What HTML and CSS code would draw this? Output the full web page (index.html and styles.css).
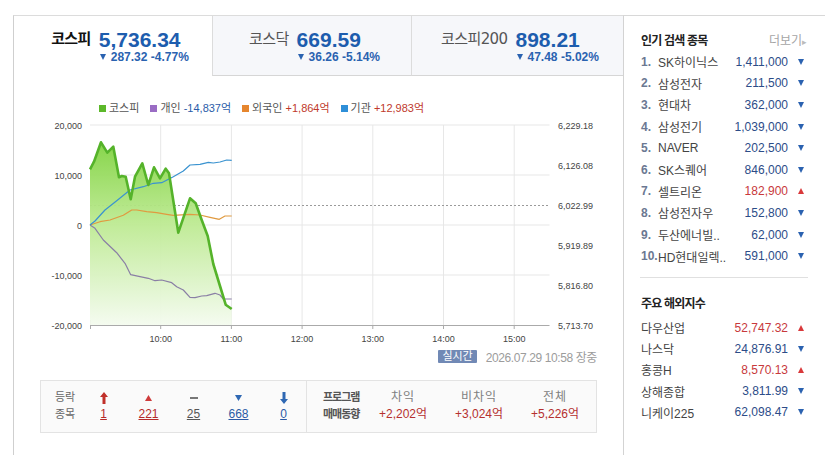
FILE: index.html
```html
<!DOCTYPE html>
<html lang="ko">
<head>
    <meta charset="UTF-8">
    <meta name="viewport" content="width=device-width, initial-scale=1.0">
    <title>국내증시</title>
    <link rel="stylesheet" href="styles.css">
</head>
<body>
<div class="page">
    <div class="main">
        <!-- Index tabs -->
        <ul class="tabs">
            <li class="tab on">
                <span class="tab-name">코스피</span>
                <div class="tab-val">
                    <strong>5,736.34</strong>
                    <span class="chg"><i class="tri-dn"></i>287.32 -4.77%</span>
                </div>
            </li>
            <li class="tab">
                <span class="tab-name">코스닥</span>
                <div class="tab-val">
                    <strong>669.59</strong>
                    <span class="chg"><i class="tri-dn"></i>36.26 -5.14%</span>
                </div>
            </li>
            <li class="tab">
                <span class="tab-name">코스피200</span>
                <div class="tab-val">
                    <strong>898.21</strong>
                    <span class="chg"><i class="tri-dn"></i>47.48 -5.02%</span>
                </div>
            </li>
        </ul>

        <!-- Chart legend -->
        <ul class="legend">
            <li><i class="sq green"></i>코스피</li>
            <li><i class="sq purple"></i>개인 <span class="minus">-14,837억</span></li>
            <li><i class="sq orange"></i>외국인 <span class="plus">+1,864억</span></li>
            <li><i class="sq blue"></i>기관 <span class="plus">+12,983억</span></li>
        </ul>

        <svg class="chart" width="580" height="230" viewBox="20 116 580 230">
            <defs>
                <linearGradient id="kospiFill" gradientUnits="userSpaceOnUse" x1="0" y1="140" x2="0" y2="325">
                    <stop offset="0" stop-color="#7fd23f"/>
                    <stop offset="0.45" stop-color="#bdea92"/>
                    <stop offset="1" stop-color="#f4fbef"/>
                </linearGradient>
            </defs>

            <!-- grid -->
            <g class="grid">
                <line x1="90" y1="125" x2="549.5" y2="125"/>
                <line x1="90" y1="175" x2="549.5" y2="175"/>
                <line x1="90" y1="225" x2="549.5" y2="225"/>
                <line x1="90" y1="275" x2="549.5" y2="275"/>
                <line x1="160.7" y1="125" x2="160.7" y2="325"/>
                <line x1="231.4" y1="125" x2="231.4" y2="325"/>
                <line x1="302.1" y1="125" x2="302.1" y2="325"/>
                <line x1="372.8" y1="125" x2="372.8" y2="325"/>
                <line x1="443.5" y1="125" x2="443.5" y2="325"/>
                <line x1="514.2" y1="125" x2="514.2" y2="325"/>
            </g>
            <g class="axis-line">
                <line x1="90" y1="325.5" x2="549.5" y2="325.5"/>
                <line x1="90.5" y1="320" x2="90.5" y2="329"/>
                <line x1="160.7" y1="325" x2="160.7" y2="329"/>
                <line x1="231.4" y1="325" x2="231.4" y2="329"/>
                <line x1="302.1" y1="325" x2="302.1" y2="329"/>
                <line x1="372.8" y1="325" x2="372.8" y2="329"/>
                <line x1="443.5" y1="325" x2="443.5" y2="329"/>
                <line x1="514.2" y1="325" x2="514.2" y2="329"/>
            </g>

            <!-- previous close -->
            <line class="prev" x1="90" y1="205.5" x2="549.5" y2="205.5"/>

            <!-- KOSPI area -->
            <polygon class="area" points="90,169.3 94,161.7 101,142.3 107.3,152.7 113.3,146.7 119,177.3 121.7,176 125.7,176.7 130.7,199.3 135,176.7 142.3,163.3 148.3,185 154,167.3 160,178.3 165.7,168.7 169,173.3 178.3,232.7 190,198.3 195.7,203.3 201.7,220 207.7,236 213.3,264 220,286 225.7,304.7 231.7,309 231.7,325 90,325"/>

            <!-- investor lines -->
            <polyline class="ln-person" points="90,225 95,228.3 103.3,240 116.7,252.7 125,263.3 130.7,274.7 140,276.7 148.3,278.3 155,280.7 161.7,280 171.7,282.7 176.7,286.7 183.3,290 190,297.3 195,297.7 201.7,296 206.7,295.7 215,293.3 220,295 223.3,299 231.7,299"/>
            <polyline class="ln-foreign" points="90,225 100,221.7 110,220 123.3,215.3 131.7,210 136.7,210 146.7,211.7 156.7,212.7 166.7,214.3 173.3,215.3 190,214.3 200,215 210,217.3 219.3,219.3 225,216 231.7,216"/>
            <polyline class="ln-inst" points="90,225 95,221 105,210 116.7,200.7 130,190 143.3,186.7 153.3,183.3 161.7,182.7 173.3,176.7 183.3,171 190,165 200,164.3 208.3,162.3 213.3,163 220,162 226.7,160 231.7,160.3"/>
            <polyline class="ln-kospi" points="90,169.3 94,161.7 101,142.3 107.3,152.7 113.3,146.7 119,177.3 121.7,176 125.7,176.7 130.7,199.3 135,176.7 142.3,163.3 148.3,185 154,167.3 160,178.3 165.7,168.7 169,173.3 178.3,232.7 190,198.3 195.7,203.3 201.7,220 207.7,236 213.3,264 220,286 225.7,304.7 231.7,309"/>

            <!-- axis labels -->
            <g class="labels left">
                <text x="82" y="128.5">20,000</text>
                <text x="82" y="178.5">10,000</text>
                <text x="82" y="228.5">0</text>
                <text x="82" y="278.5">-10,000</text>
                <text x="82" y="328.5">-20,000</text>
            </g>
            <g class="labels right">
                <text x="558" y="128.5">6,229.18</text>
                <text x="558" y="168.5">6,126.08</text>
                <text x="558" y="208.5">6,022.99</text>
                <text x="558" y="248.5">5,919.89</text>
                <text x="558" y="288.5">5,816.80</text>
                <text x="558" y="328.5">5,713.70</text>
            </g>
            <g class="labels bottom">
                <text x="160.7" y="341.5">10:00</text>
                <text x="231.4" y="341.5">11:00</text>
                <text x="302.1" y="341.5">12:00</text>
                <text x="372.8" y="341.5">13:00</text>
                <text x="443.5" y="341.5">14:00</text>
                <text x="514.2" y="341.5">15:00</text>
            </g>
        </svg>

        <div class="stamp">
            <span class="badge">실시간</span>
            <span class="time">2026.07.29 10:58 장중</span>
        </div>

        <!-- Advance / decline and program trading -->
        <div class="updown">
            <div class="ud-label">등락<br>종목</div>
            <div class="ud-col">
                <svg width="8" height="12" viewBox="0 0 8 12"><polygon points="4,0 8,5 5.5,5 5.5,12 2.5,12 2.5,5 0,5" fill="#c0302a"/></svg>
                <a class="cnt red">1</a>
            </div>
            <div class="ud-col">
                <svg width="7" height="6" viewBox="0 0 7 6"><polygon points="3.5,0 7,6 0,6" fill="#cf3b3b"/></svg>
                <a class="cnt red">221</a>
            </div>
            <div class="ud-col">
                <svg width="8" height="6" viewBox="0 0 8 6"><rect x="0" y="2" width="8" height="2" fill="#777"/></svg>
                <a class="cnt gray">25</a>
            </div>
            <div class="ud-col">
                <svg width="7" height="6" viewBox="0 0 7 6"><polygon points="0,0 7,0 3.5,6" fill="#2f68b3"/></svg>
                <a class="cnt blue">668</a>
            </div>
            <div class="ud-col">
                <svg width="8" height="12" viewBox="0 0 8 12"><polygon points="2.5,0 5.5,0 5.5,7 8,7 4,12 0,7 2.5,7" fill="#2f68b3"/></svg>
                <a class="cnt blue">0</a>
            </div>
            <div class="program">
                <div class="pg-label">프로그램<br>매매동향</div>
                <div class="pg-col"><span>차익</span><em>+2,202억</em></div>
                <div class="pg-col"><span>비차익</span><em>+3,024억</em></div>
                <div class="pg-col"><span>전체</span><em>+5,226억</em></div>
            </div>
        </div>
    </div>

    <aside class="side">
        <div class="side-title">
            <h3>인기 검색 종목</h3>
            <a class="more">더보기<i>▸</i></a>
        </div>
        <ol class="rank">
            <li><b>1.</b><span class="nm">SK하이닉스</span><span class="val">1,411,000</span><i class="dn"></i></li>
            <li><b>2.</b><span class="nm">삼성전자</span><span class="val">211,500</span><i class="dn"></i></li>
            <li><b>3.</b><span class="nm">현대차</span><span class="val">362,000</span><i class="dn"></i></li>
            <li><b>4.</b><span class="nm">삼성전기</span><span class="val">1,039,000</span><i class="dn"></i></li>
            <li><b>5.</b><span class="nm">NAVER</span><span class="val">202,500</span><i class="dn"></i></li>
            <li><b>6.</b><span class="nm">SK스퀘어</span><span class="val">846,000</span><i class="dn"></i></li>
            <li><b>7.</b><span class="nm">셀트리온</span><span class="val up">182,900</span><i class="up"></i></li>
            <li><b>8.</b><span class="nm">삼성전자우</span><span class="val">152,800</span><i class="dn"></i></li>
            <li><b>9.</b><span class="nm">두산에너빌..</span><span class="val">62,000</span><i class="dn"></i></li>
            <li><b>10.</b><span class="nm">HD현대일렉..</span><span class="val">591,000</span><i class="dn"></i></li>
        </ol>

        <div class="divider"></div>

        <div class="side-title second">
            <h3>주요 해외지수</h3>
        </div>
        <ul class="world">
            <li><span class="nm">다우산업</span><span class="val up">52,747.32</span><i class="up"></i></li>
            <li><span class="nm">나스닥</span><span class="val">24,876.91</span><i class="dn"></i></li>
            <li><span class="nm">홍콩H</span><span class="val up">8,570.13</span><i class="up"></i></li>
            <li><span class="nm">상해종합</span><span class="val">3,811.99</span><i class="dn"></i></li>
            <li><span class="nm">니케이225</span><span class="val">62,098.47</span><i class="dn"></i></li>
        </ul>
    </aside>
</div>
</body>
</html>
```

FILE: styles.css
```css
body {
    margin: 0;
    font-family: 'Liberation Sans', 'Noto Sans CJK KR', sans-serif;
    font-size: 12px;
    color: #333;
    background: #fff;
}

ul, ol {
    margin: 0;
    padding: 0;
    list-style: none;
}

.page {
    display: flex;
    padding: 15px 0 0 13px;
    height: 440px;
    overflow: hidden;
}

/* left block */
.main {
    width: 609px;
    border-left: 1px solid #cfcfcf;
    border-top: 1px solid #dcdcdc;
}

.tabs {
    display: grid;
    grid-template-columns: 198px 199px 1fr;
    height: 60px;
}

.tab {
    display: flex;
    justify-content: center;
    align-items: flex-start;
    gap: 8px;
    padding: 13px 0 0 5px;
    background: #f6f7fa;
    border-left: 1px solid #dcdcdc;
    border-bottom: 1px solid #d6d6d6;
}

.tab.on {
    padding-left: 14px;
    background: #fff;
    border-left: 0;
    border-bottom-color: transparent;
}

.tab-name {
    font-family: 'DejaVu Sans', 'Noto Sans CJK KR', sans-serif;
    font-size: 15px;
    line-height: 21px;
    color: #555;
    letter-spacing: -0.6px;
}

.tab.on .tab-name {
    color: #111;
    font-weight: bold;
}

.tab-val strong {
    display: block;
    font-size: 21px;
    line-height: 21px;
    color: #1d5dae;
}

.chg {
    display: block;
    font-size: 12px;
    line-height: 14px;
    font-weight: bold;
    color: #2a62b0;
    white-space: nowrap;
}

.tri-dn {
    display: inline-block;
    width: 0;
    height: 0;
    border-left: 3px solid transparent;
    border-right: 3px solid transparent;
    border-top: 6px solid #2a62b0;
    margin: 0 5px 1px 1px;
}

/* chart legend */
.legend {
    display: flex;
    gap: 11px;
    margin: 24px 0 0 85px;
    height: 16px;
    line-height: 16px;
    font-size: 11px;
    color: #555;
}

.sq {
    display: inline-block;
    width: 7px;
    height: 7px;
    margin-right: 3px;
    vertical-align: 0;
}

.sq.green { background: #5cb82a; }
.sq.purple { background: #9a6cc4; }
.sq.orange { background: #e6862e; }
.sq.blue { background: #2e8fd8; }

.legend .minus { color: #2a5ca8; }
.legend .plus { color: #c0392b; }

.chart {
    display: block;
    margin-left: 6px;
}

.grid line {
    stroke: #e7e7e7;
    stroke-width: 1;
}

.axis-line line {
    stroke: #aaa;
    stroke-width: 1;
}

.prev {
    stroke: #9a9a9a;
    stroke-width: 1;
    stroke-dasharray: 2 2;
}

.area {
    fill: url(#kospiFill);
    opacity: 0.95;
}

.chart polyline {
    fill: none;
    stroke-linejoin: round;
}

.ln-kospi { stroke: #55b32a; stroke-width: 2.6; }
.ln-inst { stroke: #3a93d0; stroke-width: 1.2; }
.ln-foreign { stroke: #e09a40; stroke-width: 1.2; }
.ln-person { stroke: #8a7fa5; stroke-width: 1.2; }

.labels text {
    font-family: 'Liberation Sans', sans-serif;
    font-size: 9px;
    fill: #444;
}

.labels.left text { text-anchor: end; }
.labels.bottom text { text-anchor: middle; }

.stamp {
    display: flex;
    justify-content: flex-end;
    align-items: center;
    height: 14px;
    margin-top: 3px;
    padding-right: 26px;
}

.badge {
    background: #7189b5;
    color: #fff;
    font-size: 11px;
    line-height: 13px;
    padding: 0 4px;
    border-radius: 1px;
}

.time {
    margin-left: 9px;
    color: #9c9c9c;
    font-size: 12px;
    letter-spacing: -0.4px;
}

/* advance / decline box */
.updown {
    display: flex;
    width: 555px;
    height: 51px;
    margin: 17px 0 0 26px;
    border: 1px solid #e3e3e3;
    background: #fafafa;
}

.ud-label {
    width: 26px;
    padding: 8px 0 0 14px;
    line-height: 17px;
    font-size: 11px;
    color: #666;
}

.ud-col {
    width: 45px;
    padding-top: 8px;
    display: flex;
    flex-direction: column;
    align-items: center;
}

.ud-col svg {
    display: block;
}

.ud-col svg[height="6"] {
    margin: 6px 0 5px;
}

.ud-col svg[height="12"] {
    margin: 3px 0 2px;
}

.cnt {
    font-size: 12px;
    line-height: 17px;
    text-decoration: underline;
}

.cnt.red { color: #b52a2a; }
.cnt.gray { color: #555; }
.cnt.blue { color: #2a5aa5; }

.program {
    display: flex;
    padding-left: 16px;
    border-left: 1px solid #e3e3e3;
}

.pg-label {
    width: 42px;
    padding-top: 8px;
    line-height: 17px;
    font-size: 11px;
    font-weight: bold;
    color: #555;
    letter-spacing: -1px;
}

.pg-col {
    width: 76px;
    padding-top: 8px;
    display: flex;
    flex-direction: column;
    align-items: center;
    line-height: 17px;
}

.pg-col span {
    font-size: 12px;
    color: #808080;
    letter-spacing: 1px;
}

.pg-col em {
    font-style: normal;
    font-size: 12px;
    color: #b5302f;
}

/* right panel */
.side {
    width: 167px;
    padding: 13px 17px 0 17px;
    border-left: 1px solid #d3d3d3;
    border-top: 1px solid #d8d8d8;
}

.side-title {
    display: flex;
    justify-content: space-between;
    align-items: center;
    height: 20px;
}

.side-title h3 {
    margin: 0;
    font-size: 12px;
    font-weight: bold;
    color: #222;
    letter-spacing: -0.8px;
}

.more {
    color: #a5a5a5;
    font-size: 12px;
    margin-right: 1px;
}

.more i {
    font-style: normal;
    font-size: 9px;
    color: #bbb;
}

.rank {
    margin-top: 2px;
}

.rank li,
.world li {
    display: grid;
    grid-template-columns: 17px 1fr auto 20px;
    align-items: center;
    height: 21.6px;
    white-space: nowrap;
}

.world li {
    grid-template-columns: 1fr auto 20px;
    height: 21.2px;
}

.rank b {
    font-size: 12px;
    color: #6b7892;
}

.nm {
    font-size: 12px;
    color: #444;
    overflow: hidden;
}

.val {
    font-size: 12px;
    color: #2c4c88;
    text-align: right;
}

.val.up {
    color: #c8393c;
}

.rank i,
.world i {
    justify-self: end;
    margin-right: 4px;
    width: 0;
    height: 0;
    border-left: 3px solid transparent;
    border-right: 3px solid transparent;
}

i.dn { border-top: 6px solid #2b62b0; }
i.up { border-bottom: 6px solid #d9393b; }

.divider {
    height: 1px;
    background: #e0e0e0;
    margin: 10px 0 0 -1px;
}

.side-title.second {
    margin-top: 15px;
}

.world {
    margin-top: 4px;
}
```
